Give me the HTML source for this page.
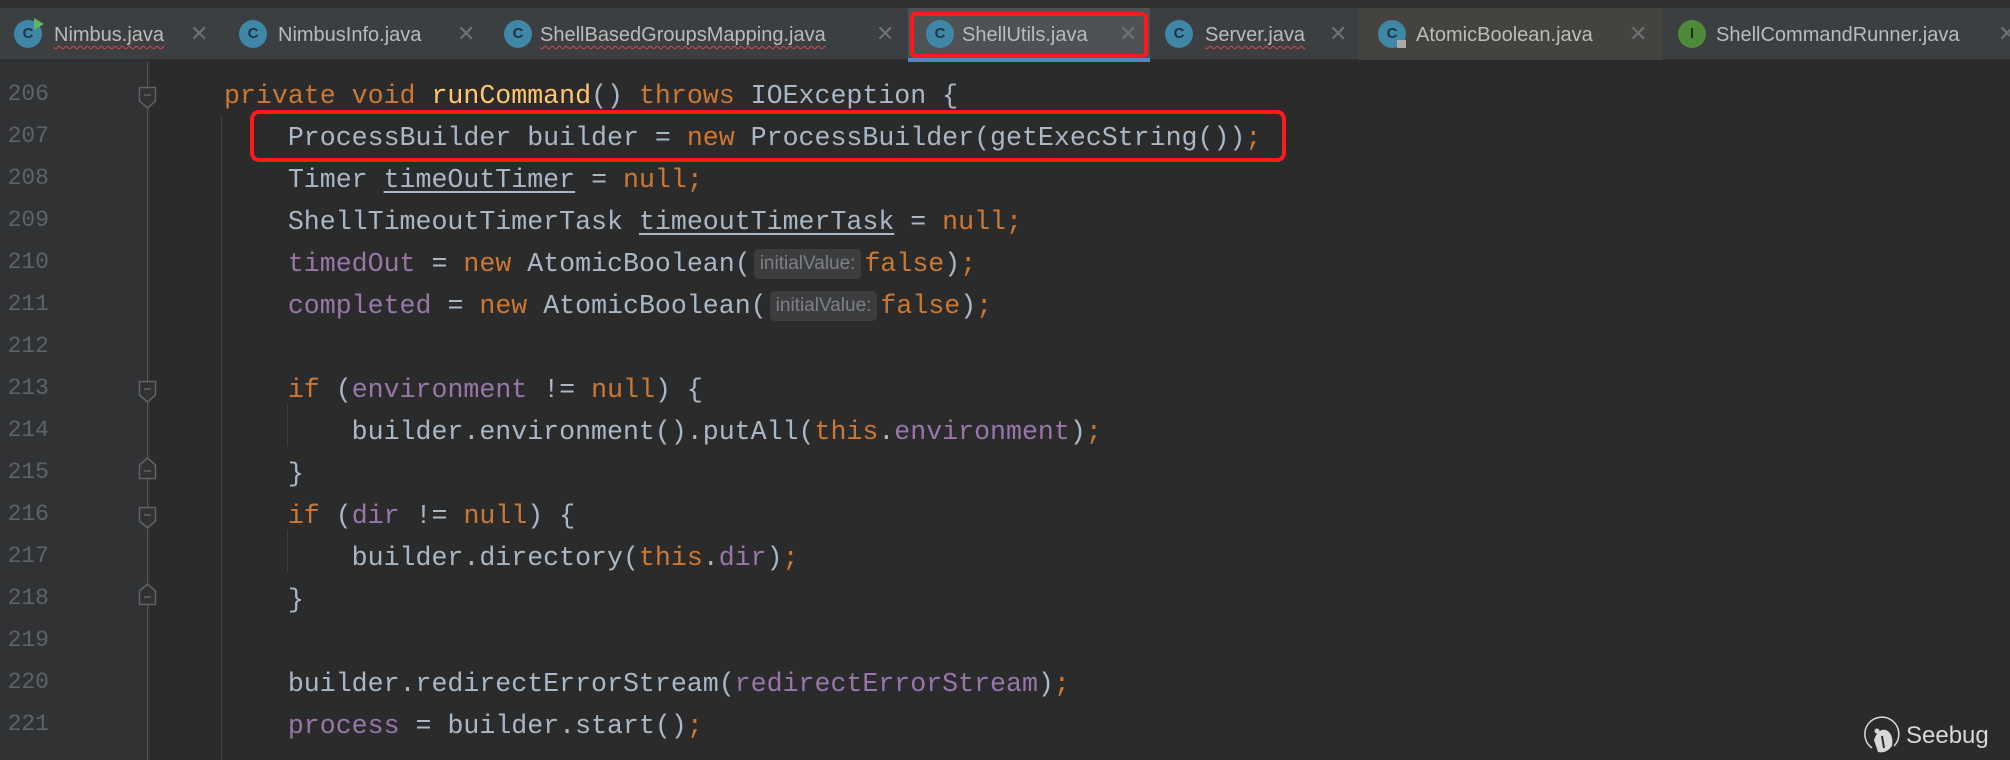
<!DOCTYPE html>
<html><head><meta charset="utf-8"><style>
*{margin:0;padding:0;box-sizing:border-box}
body{width:2010px;height:760px;background:#2b2b2b;overflow:hidden;position:relative;font-family:"Liberation Mono",monospace}
.top{position:absolute;left:0;top:0;width:2010px;height:8px;background:#2f3133}
.tabs{position:absolute;left:0;top:8px;width:2010px;height:52px;background:#3c3f41;border-bottom:1px solid #323232}
.gut{position:absolute;left:0;top:61px;width:150px;height:699px;background:#303234}
.ic{position:absolute;top:12px;width:28px;height:28px;border-radius:50%;background:#3f87a6;color:#1e3440;font:bold 15px "Liberation Sans",sans-serif;text-align:center;line-height:28px}
.tt{position:absolute;top:23px;font:20px "Liberation Sans",sans-serif;color:#bbbbbb;white-space:nowrap;line-height:24px}
.wavy{text-decoration:underline wavy #d9464b;text-decoration-thickness:1px;text-underline-offset:4px}
.x{position:absolute;top:21px;font:22px "Liberation Sans",sans-serif;color:#6e7173}
.ln{position:absolute;left:0;width:49px;text-align:right;font-size:23px;color:#606366;line-height:42px}
.cl{position:absolute;left:224px;font-size:26.6px;color:#a9b7c6;white-space:pre;line-height:42px;letter-spacing:0}
.k{color:#cc7832}.m{color:#ffc66d}.f{color:#9876aa}.u{text-decoration:underline;text-underline-offset:4px}
.h{display:inline-block;background:#3b3d3f;color:#7e8083;font:19px "Liberation Sans",sans-serif;border-radius:5px;padding:0 6px;line-height:30px;vertical-align:2px;margin:0 3px}
.g{position:absolute;width:1px;background:#3d3d3d}
.fold{position:absolute;left:138px}
</style></head><body>
<div class="top"></div>
<div class="tabs"></div>
<div class="gut"></div>
<div style="position:absolute;left:908px;top:8px;width:242px;height:52px;background:#4e5254"></div>
<div style="position:absolute;left:1359px;top:8px;width:303px;height:52px;background:#45433f"></div>
<div style="position:absolute;left:908px;top:58px;width:242px;height:4px;background:#4a88c7"></div>

<div class="ic" style="left:14px;top:20px">C</div><div style="position:absolute;left:34px;top:18px;width:0;height:0;border-left:10px solid #5cb85c;border-top:6px solid transparent;border-bottom:6px solid transparent"></div>
<div class="tt wavy" style="left:54px">Nimbus.java</div><div class="x" style="left:190px">✕</div>
<div class="ic" style="left:239px;top:20px">C</div>
<div class="tt" style="left:278px">NimbusInfo.java</div><div class="x" style="left:457px">✕</div>
<div class="ic" style="left:504px;top:20px">C</div>
<div class="tt wavy" style="left:540px">ShellBasedGroupsMapping.java</div><div class="x" style="left:876px">✕</div>
<div class="ic" style="left:926px;top:20px">C</div>
<div class="tt" style="left:962px">ShellUtils.java</div><div class="x" style="left:1119px">✕</div>
<div class="ic" style="left:1165px;top:20px">C</div>
<div class="tt wavy" style="left:1205px">Server.java</div><div class="x" style="left:1329px">✕</div>
<div class="ic" style="left:1378px;top:20px">C</div><div style="position:absolute;left:1397px;top:40px;width:9px;height:8px;background:#aaa"></div>
<div class="tt" style="left:1416px">AtomicBoolean.java</div><div class="x" style="left:1629px">✕</div>
<div class="ic" style="left:1678px;top:20px;background:#4f8a3c;color:#1f3318">I</div>
<div class="tt" style="left:1716px">ShellCommandRunner.java</div><div class="x" style="left:1998px">✕</div>
<div style="position:absolute;left:910px;top:12px;width:238px;height:46px;border:4px solid #ff1a1a;border-radius:6px"></div>

<div class="g" style="left:147px;top:62px;height:698px;background:#555"></div>
<div class="g" style="left:221px;top:116px;height:644px;background:#404040"></div>
<div class="g" style="left:287px;top:404px;height:42px"></div>
<div class="g" style="left:287px;top:530px;height:42px"></div>

<svg class="fold" style="top:86px" width="19" height="24"><path d="M1.5 1.5H17.5V15L9.5 22L1.5 15Z" fill="#303234" stroke="#606366" stroke-width="1.5"/><path d="M6 9H13" stroke="#606366" stroke-width="1.5"/></svg>
<svg class="fold" style="top:380px" width="19" height="24"><path d="M1.5 1.5H17.5V15L9.5 22L1.5 15Z" fill="#303234" stroke="#606366" stroke-width="1.5"/><path d="M6 9H13" stroke="#606366" stroke-width="1.5"/></svg>
<svg class="fold" style="top:506px" width="19" height="24"><path d="M1.5 1.5H17.5V15L9.5 22L1.5 15Z" fill="#303234" stroke="#606366" stroke-width="1.5"/><path d="M6 9H13" stroke="#606366" stroke-width="1.5"/></svg>
<svg class="fold" style="top:456px" width="19" height="24"><path d="M1.5 22.5H17.5V9L9.5 2L1.5 9Z" fill="#303234" stroke="#606366" stroke-width="1.5"/><path d="M6 15H13" stroke="#606366" stroke-width="1.5"/></svg>
<svg class="fold" style="top:582px" width="19" height="24"><path d="M1.5 22.5H17.5V9L9.5 2L1.5 9Z" fill="#303234" stroke="#606366" stroke-width="1.5"/><path d="M6 15H13" stroke="#606366" stroke-width="1.5"/></svg>

<div class="ln" style="top:73px">206</div>
<div class="ln" style="top:115px">207</div>
<div class="ln" style="top:157px">208</div>
<div class="ln" style="top:199px">209</div>
<div class="ln" style="top:241px">210</div>
<div class="ln" style="top:283px">211</div>
<div class="ln" style="top:325px">212</div>
<div class="ln" style="top:367px">213</div>
<div class="ln" style="top:409px">214</div>
<div class="ln" style="top:451px">215</div>
<div class="ln" style="top:493px">216</div>
<div class="ln" style="top:535px">217</div>
<div class="ln" style="top:577px">218</div>
<div class="ln" style="top:619px">219</div>
<div class="ln" style="top:661px">220</div>
<div class="ln" style="top:703px">221</div>

<div class="cl" style="top:75px"><span class="k">private void </span><span class="m">runCommand</span>() <span class="k">throws </span>IOException {</div>
<div class="cl" style="top:117px">    ProcessBuilder builder = <span class="k">new </span>ProcessBuilder(getExecString())<span class="k">;</span></div>
<div class="cl" style="top:159px">    Timer <span class="u">timeOutTimer</span> = <span class="k">null;</span></div>
<div class="cl" style="top:201px">    ShellTimeoutTimerTask <span class="u">timeoutTimerTask</span> = <span class="k">null;</span></div>
<div class="cl" style="top:243px">    <span class="f">timedOut</span> = <span class="k">new </span>AtomicBoolean(<span class="h">initialValue:</span><span class="k">false</span>)<span class="k">;</span></div>
<div class="cl" style="top:285px">    <span class="f">completed</span> = <span class="k">new </span>AtomicBoolean(<span class="h">initialValue:</span><span class="k">false</span>)<span class="k">;</span></div>
<div class="cl" style="top:369px">    <span class="k">if </span>(<span class="f">environment</span> != <span class="k">null</span>) {</div>
<div class="cl" style="top:411px">        builder.environment().putAll(<span class="k">this</span>.<span class="f">environment</span>)<span class="k">;</span></div>
<div class="cl" style="top:453px">    }</div>
<div class="cl" style="top:495px">    <span class="k">if </span>(<span class="f">dir</span> != <span class="k">null</span>) {</div>
<div class="cl" style="top:537px">        builder.directory(<span class="k">this</span>.<span class="f">dir</span>)<span class="k">;</span></div>
<div class="cl" style="top:579px">    }</div>
<div class="cl" style="top:663px">    builder.redirectErrorStream(<span class="f">redirectErrorStream</span>)<span class="k">;</span></div>
<div class="cl" style="top:705px">    <span class="f">process</span> = builder.start()<span class="k">;</span></div>

<div style="position:absolute;left:250px;top:110px;width:1036px;height:52px;border:4px solid #ff1a1a;border-radius:9px"></div>

<svg style="position:absolute;left:1860px;top:710px" width="44" height="46" viewBox="0 0 44 46">
<path d="M12 38 A17 17 0 1 1 34 36" fill="none" stroke="#ddd" stroke-width="1.5"/>
<path d="M14 30 Q18 18 26 20 Q34 24 32 36 Q26 44 18 42 Z" fill="#d8d8d8"/>
<path d="M22 26 L24 38" stroke="#2b2b2b" stroke-width="2"/>
<circle cx="17" cy="21" r="2.5" fill="#d8d8d8"/>
</svg>
<div style="position:absolute;left:1906px;top:722px;font:24px 'Liberation Sans',sans-serif;color:#d8d8d8;font-weight:300">Seebug</div>
</body></html>
